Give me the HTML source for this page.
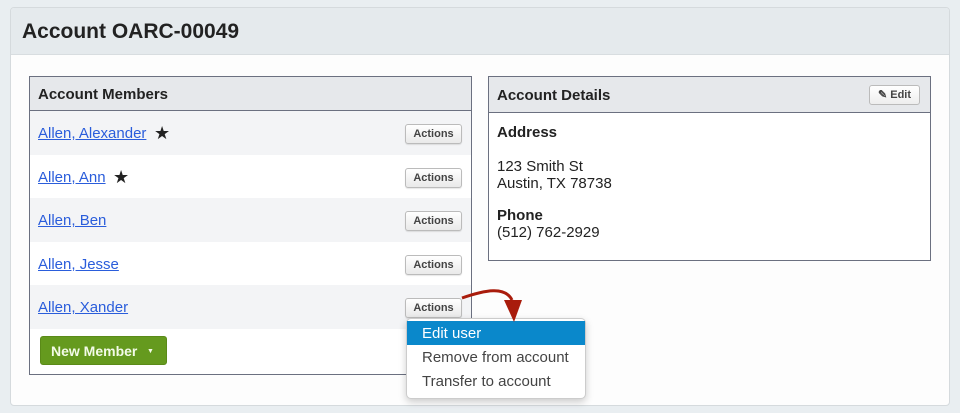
<!DOCTYPE html>
<html><head><style>
body{margin:0;width:960px;height:413px;background:#e9eef1;font-family:"Liberation Sans",sans-serif;position:relative;overflow:hidden}
.outer{position:absolute;left:10px;top:7px;width:938px;height:397px;background:#fdfdfd;border:1px solid #d5dadd;border-radius:4px;overflow:hidden}
.oh{height:46px;background:#e5eaed;border-bottom:1px solid #d8dde0;font-weight:bold;font-size:21px;color:#222;padding-left:11px;line-height:48px}
.box{position:absolute;border:1px solid #6b7080;background:#fff}
.bh{height:33px;background:#e6e8eb;border-bottom:1px solid #6b7080;font-weight:bold;font-size:15px;color:#222;padding-left:8px;line-height:35px}
.row{height:43.6px;position:relative;font-size:15px}
.row.s{background:#f3f4f6}
.row a{position:absolute;left:8px;top:14px;color:#2a5ddb;text-decoration:underline}
.star{font-size:18px;color:#222;position:absolute;top:12px}
.act{position:absolute;right:9px;top:13px;width:55px;height:18px;border:1px solid #bbb;border-radius:3px;background:linear-gradient(#fff,#e9e9e9);font-size:11px;font-weight:bold;color:#444;text-align:center;line-height:18px;box-shadow:0 1px 1px rgba(0,0,0,.1)}
.btn{position:absolute;left:10px;top:259px;width:127px;height:29px;background:#659a1e;border:1px solid #5a8a18;border-radius:3px;color:#f3fbe8;font-weight:bold;font-size:14px;line-height:29px;padding-left:10px;box-sizing:border-box}
.menu{position:absolute;left:406px;top:318px;width:178px;height:79px;background:#fff;border:1px solid #ccc;border-radius:5px;box-shadow:0 3px 8px rgba(0,0,0,.2);font-size:15px;color:#444}
.mi{height:24px;line-height:26px;padding-left:15px}
</style></head><body>
<div class="outer"><div class="oh">Account OARC-00049</div></div>
<div class="box" style="left:29px;top:76px;width:441px;height:297px">
<div class="bh">Account Members</div>
<div class="row s"><a>Allen, Alexander</a><span class="star" style="left:124px">★</span><div class="act">Actions</div></div>
<div class="row"><a>Allen, Ann</a><span class="star" style="left:83px">★</span><div class="act">Actions</div></div>
<div class="row s"><a>Allen, Ben</a><div class="act">Actions</div></div>
<div class="row"><a>Allen, Jesse</a><div class="act">Actions</div></div>
<div class="row s"><a>Allen, Xander</a><div class="act">Actions</div></div>
<div class="btn">New Member<span style="position:absolute;left:106px;top:0;font-size:7px">▼</span></div>
</div>
<div class="box" style="left:488px;top:76px;width:441px;height:183px">
<div class="bh" style="height:35px;line-height:37px">Account Details
<div style="position:absolute;right:10px;top:8px;width:49px;height:18px;border:1px solid #bbb;border-radius:3px;background:linear-gradient(#fff,#eee);font-size:11px;color:#444;font-weight:bold;line-height:18px;text-align:center">✎ Edit</div></div>
<div style="padding:11px 8px;font-size:15px;color:#222;line-height:17px">
<b>Address</b><br><br>123 Smith St<br>Austin, TX 78738<br><div style="height:15px"></div><b>Phone</b><br>(512) 762-2929</div>
</div>
<div class="menu"><div style="height:2px"></div>
<div class="mi" style="background:#0a88cb;color:#fff">Edit user</div>
<div class="mi">Remove from account</div>
<div class="mi">Transfer to account</div></div>
<svg style="position:absolute;left:0;top:0" width="960" height="413">
<path d="M462 298 C485 290 505 286 512 300" stroke="#a91c0c" stroke-width="3" fill="none"/>
<path d="M504 300 L522 300 L514 322 Z" fill="#a91c0c"/>
</svg>
</body></html>
